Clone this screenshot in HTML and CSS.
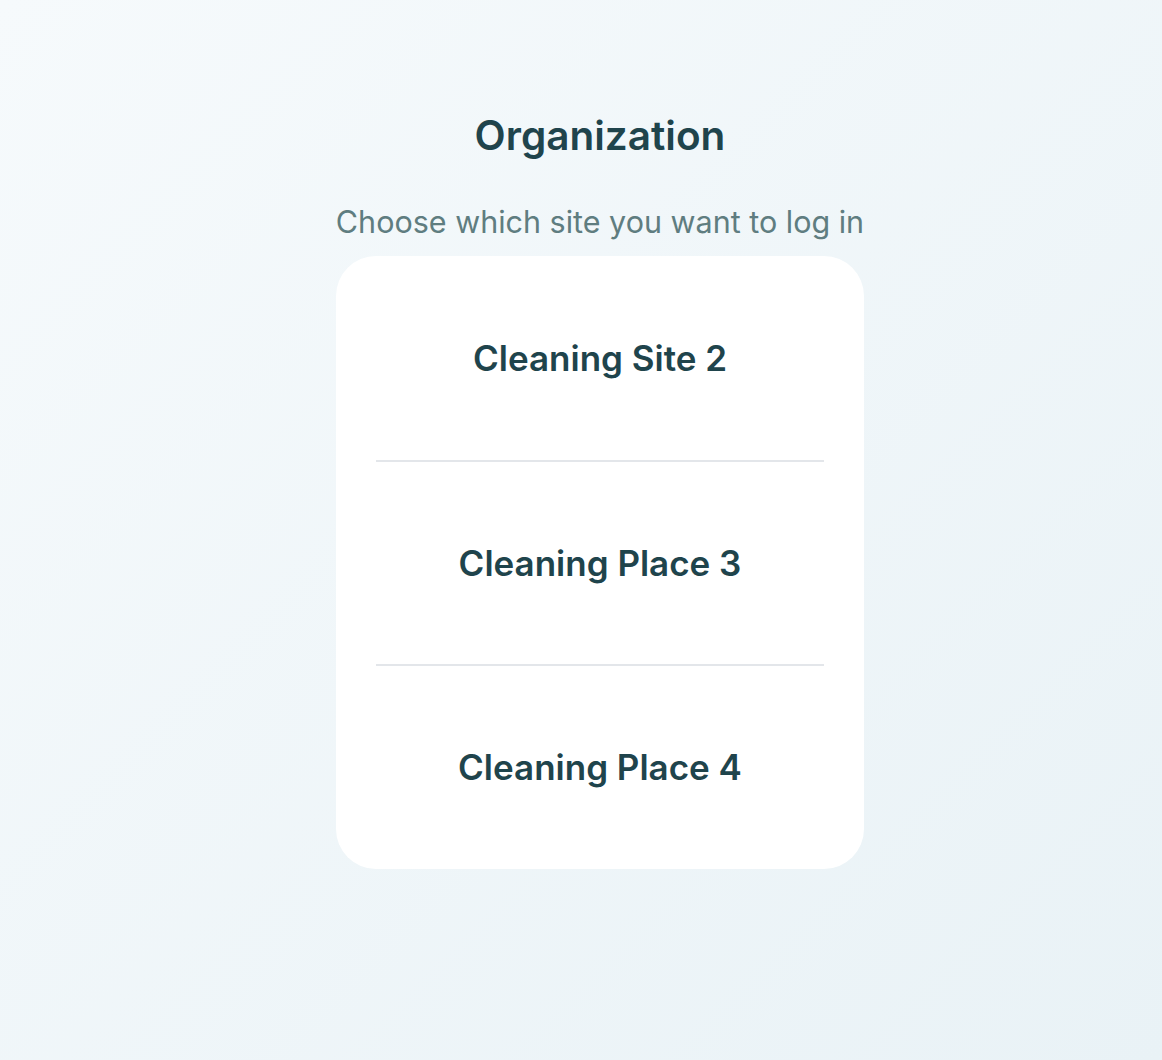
FILE: index.html
```html
<!DOCTYPE html>
<html lang="en">
<head>
    <meta charset="UTF-8">
    <meta name="viewport" content="width=device-width, initial-scale=1.0">
    <title>Organization</title>
    <link rel="stylesheet" href="styles.css">
</head>
<body>
    <div class="page">
        <h1 class="title">Organization</h1>
        <p class="subtitle">Choose which site you want to log in</p>
        <div class="site-list">
            <div class="site-item">Cleaning Site 2</div>
            <div class="site-item">Cleaning Place 3</div>
            <div class="site-item">Cleaning Place 4</div>
        </div>
    </div>
</body>
</html>
```

FILE: styles.css
```css
html, body { height: 100%; }
body {
    margin: 0;
    font-family: Inter, "Noto Sans", sans-serif;
    color: #1f444c;
    background: linear-gradient(135deg, #f6fafc 0%, #e9f2f6 100%);
}
.page {
    display: flex;
    flex-direction: column;
    align-items: center;
    padding: 110px 0 0 38px;
}
.title { margin: 0; font-size: 40.5px; font-weight: 600; line-height: 52px; }
.subtitle { margin: 40px 0 0; font-size: 30.5px; line-height: 40px; color: #5f7d80; }
.site-list {
    width: 528px;
    margin-top: 14px;
    padding: 0 40px 1px;
    box-sizing: border-box;
    background: #fff;
    border-radius: 40px;
}
.site-item {
    height: 204px;
    box-sizing: border-box;
    display: flex;
    align-items: center;
    justify-content: center;
    font-size: 35px;
    font-weight: 600;
    border-top: 2px solid #e3e6ea;
}
.site-item:first-child { border-top: none; }
```
